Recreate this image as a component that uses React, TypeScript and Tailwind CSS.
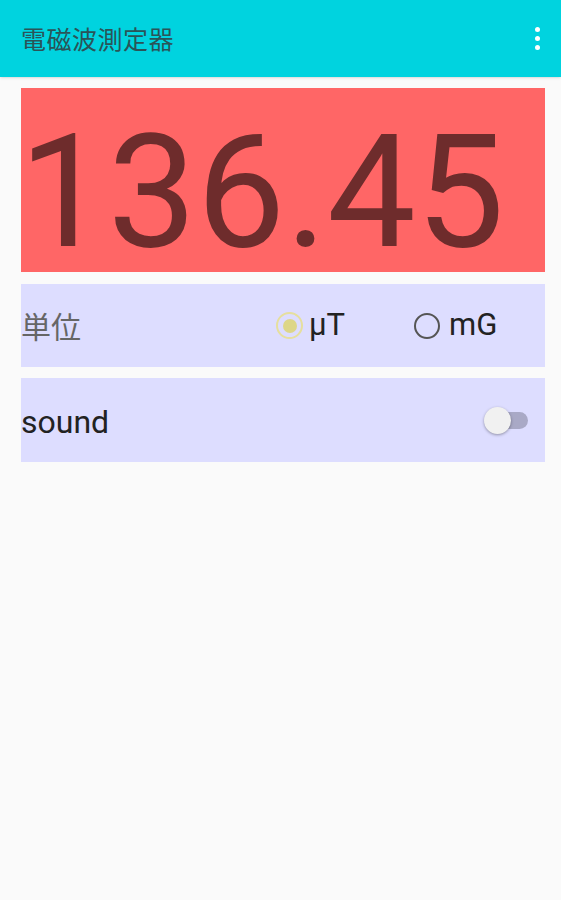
// 電磁波測定器 — メイン画面
export default function App() {
  return (
    <div className="w-[561px] h-[900px] bg-[#fafafa] flex flex-col" style={{ fontFamily: 'Roboto, "Noto Sans CJK JP", sans-serif' }}>
      {/* ツールバー */}
      <div className="h-[77px] bg-[#00d3df] flex items-center pl-[21px] pr-[21px] shadow-sm">
        <div className="flex-1 text-[25px] text-[#2a5458] tracking-[0.5px]" style={{ fontFamily: '"Noto Sans CJK JP", sans-serif' }}>
          電磁波測定器
        </div>
        <div className="flex flex-col gap-[4px] items-center">
          <div className="w-[5px] h-[5px] rounded-full bg-white" />
          <div className="w-[5px] h-[5px] rounded-full bg-white" />
          <div className="w-[5px] h-[5px] rounded-full bg-white" />
        </div>
      </div>

      <div className="flex flex-col pl-[21px] pt-[11px] gap-[12px]">
        {/* 測定値 */}
        <div className="w-[524px] h-[184px] bg-[#ff6666] flex items-start pt-[25px] overflow-hidden">
          <span className="text-[158px] leading-none text-[#6e2c2c] -ml-[2px]">136.45</span>
        </div>

        <div className="flex flex-col gap-[11px]">
          {/* 単位 */}
          <div className="w-[524px] h-[83px] bg-[#ddddff] flex items-center">
            <span className="text-[30px] text-[#666] w-[255px]" style={{ fontFamily: '"Noto Sans CJK JP", sans-serif' }}>単位</span>
            <div className="flex items-center w-[138px]">
              <div className="w-[27px] h-[27px] rounded-full border-2 border-[#e6df9e] flex items-center justify-center">
                <div className="w-[14px] h-[14px] rounded-full bg-[#ddd688]" />
              </div>
              <span className="ml-[6px] text-[31px] text-[#222]">μT</span>
            </div>
            <div className="flex items-center">
              <div className="w-[26px] h-[26px] rounded-full border-2 border-[#555]" />
              <span className="ml-[9px] text-[31px] text-[#222]">mG</span>
            </div>
          </div>

          {/* sound */}
          <div className="w-[524px] h-[84px] bg-[#ddddff] flex items-center">
            <span className="flex-1 text-[32px] text-[#222] mt-[3px]">sound</span>
            <div className="relative w-[46px] h-[28px] mr-[15px] flex items-center">
              <div className="absolute left-[12px] w-[32px] h-[17px] rounded-full bg-[#a9a9c6]" />
              <div className="absolute left-0 w-[27px] h-[27px] rounded-full bg-[#f1f1f1] shadow-[0_1px_3px_rgba(0,0,0,0.35)]" />
            </div>
          </div>
        </div>
      </div>
    </div>
  )
}
